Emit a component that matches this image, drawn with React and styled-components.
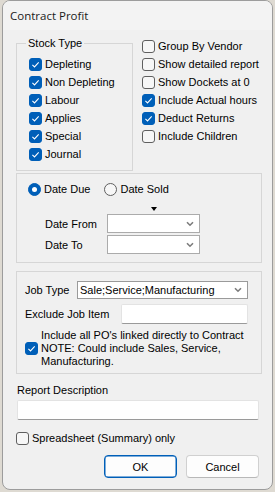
import React from 'react';
import styled, { createGlobalStyle } from 'styled-components';

const Global = createGlobalStyle`
  html, body { margin: 0; padding: 0; }
  body {
    background: #dedad2;
    width: 275px;
    height: 492px;
    overflow: hidden;
    font-family: "Liberation Sans", Arial, sans-serif;
    font-size: 11px;
    color: #000;
  }
  * { box-sizing: border-box; }
`;

const Window = styled.div`
  margin-left: 2px;
  width: 271px;
  height: 490px;
  border: 1px solid #9c9c9c;
  border-radius: 8px;
  background: #f0f0f0;
  overflow: hidden;
  display: flex;
  flex-direction: column;
`;

const TitleBar = styled.div`
  height: 29px;
  flex: none;
  background: #f3f3f3;
  display: flex;
  align-items: center;
  padding-left: 7px;
  font-family: "Open Sans", "Noto Sans", sans-serif;
  font-size: 11.5px;
  color: #1b1b1b;
`;

const Body = styled.div`
  padding: 7px 10px 0 13px;
  display: flex;
  flex-direction: column;
`;

const TopRow = styled.div`
  display: flex;
  align-items: flex-start;
  gap: 9px;
`;

const Group = styled.div`
  position: relative;
  border: 1px solid #d6d6d6;
  width: ${p => p.$w || 'auto'};
  height: ${p => p.$h}px;
  margin-top: ${p => p.$mt || 0}px;
  padding: ${p => p.$pad};
`;

const Legend = styled.span`
  position: absolute;
  top: -7px;
  left: 9px;
  padding: 0 2px;
  line-height: 13px;
  background: #f0f0f0;
`;

const Column = styled.div`
  display: flex;
  flex-direction: column;
`;

const CheckRow = styled.label`
  display: flex;
  align-items: center;
  gap: ${p => p.$gap ?? 3}px;
  height: ${p => p.$h || 18}px;
  margin-left: ${p => p.$ml || 0}px;
  margin-top: ${p => p.$mt || 0}px;
  white-space: nowrap;
  line-height: 13px;
`;

const Box = styled.span`
  flex: none;
  width: 13px;
  height: 13px;
  border-radius: 3px;
  display: flex;
  align-items: center;
  justify-content: center;
  background: ${p => (p.$on ? '#005fb8' : '#f7f7f7')};
  border: 1px solid ${p => (p.$on ? '#005fb8' : '#5f5f5f')};
`;

const Check = ({ on }) => (
  <Box $on={on}>
    {on && (
      <svg width="11" height="11" viewBox="0 0 11 11">
        <path d="M2.4 5.8 L4.5 7.9 L8.7 3.4" fill="none" stroke="#fff" strokeWidth="1.1" />
      </svg>
    )}
  </Box>
);

const CheckItem = ({ on, children, ...rest }) => (
  <CheckRow {...rest}>
    <Check on={on} />
    <span>{children}</span>
  </CheckRow>
);

const RadioRow = styled.div`
  display: flex;
  align-items: center;
  height: 14px;
`;

const RadioOption = styled.label`
  display: flex;
  align-items: center;
  gap: 3px;
  margin-right: 14px;
  white-space: nowrap;
`;

const RadioCircle = styled.span`
  flex: none;
  width: 13px;
  height: 13px;
  border-radius: 50%;
  display: flex;
  align-items: center;
  justify-content: center;
  background: ${p => (p.$on ? '#005fb8' : '#f7f7f7')};
  border: 1px solid ${p => (p.$on ? '#005fb8' : '#5f5f5f')};
  &::after {
    content: '';
    display: ${p => (p.$on ? 'block' : 'none')};
    width: 5px;
    height: 5px;
    border-radius: 50%;
    background: #fff;
  }
`;

const Radio = ({ on, children }) => (
  <RadioOption>
    <RadioCircle $on={on} />
    <span>{children}</span>
  </RadioOption>
);

const DateGrid = styled.div`
  margin-left: 17px;
  display: grid;
  grid-template-columns: 62px 93px;
  row-gap: 2px;
  align-items: center;
`;

const TriangleCell = styled.div`
  grid-column: 2;
  height: 4px;
  margin-top: 11px;
  margin-bottom: 1px;
  display: flex;
  justify-content: center;
`;

const Triangle = styled.span`
  width: 0;
  height: 0;
  border-left: 3.5px solid transparent;
  border-right: 3.5px solid transparent;
  border-top: 4px solid #000;
`;

const Combo = styled.div`
  height: ${p => p.$h || 19}px;
  flex: 1;
  background: #fff;
  border: 1px solid ${p => p.$border || '#ababab'};
  display: flex;
  align-items: center;
  justify-content: space-between;
  padding: 0 5px 0 2px;
  white-space: nowrap;
`;

const Chevron = () => (
  <svg width="8" height="6" viewBox="0 0 8 6">
    <path d="M1 1.2 L4 4.2 L7 1.2" fill="none" stroke="#7c7c7c" strokeWidth="1.6" />
  </svg>
);

const FieldRow = styled.div`
  display: flex;
  align-items: center;
  margin-top: ${p => p.$mt || 0}px;
`;

const FieldLabel = styled.span`
  width: ${p => p.$w}px;
  flex: none;
  white-space: nowrap;
`;

const TextInput = styled.div`
  height: 20px;
  flex: ${p => (p.$fill ? 1 : 'none')};
  margin-top: ${p => p.$mt || 0}px;
  background: #fff;
  border: 1px solid #e3e3e3;
  border-bottom-color: #9a9a9a;
  border-radius: 2px;
`;

const Note = styled.span`
  line-height: 13px;
  white-space: nowrap;
`;

const Bottom = styled.div`
  margin: 0 3px 0 1px;
  display: flex;
  flex-direction: column;
`;

const PlainLabel = styled.div`
  margin-top: 10px;
  line-height: 13px;
`;

const Buttons = styled.div`
  display: flex;
  justify-content: flex-end;
  gap: 9px;
  margin-top: 8px;
`;

const Button = styled.button`
  width: 73px;
  height: 23px;
  border-radius: 4px;
  background: #fdfdfd;
  font-family: "Liberation Sans", Arial, sans-serif;
  font-size: 11px;
  color: #000;
  padding: 0;
  border: 1px solid ${p => (p.$primary ? '#005fb8' : '#d0d0d0')};
  border-bottom-color: ${p => (p.$primary ? '#005fb8' : '#b8b8b8')};
  box-shadow: ${p => (p.$primary ? 'inset 0 0 0 0.5px #005fb8' : 'none')};
`;

export default function App() {
  return (
    <>
      <Global />
      <Window>
        <TitleBar>Contract Profit</TitleBar>
        <Body>
          <TopRow>
            <Group $w="117px" $h={128} $mt={6} $pad="11px 0 0 12px">
              <Legend>Stock Type</Legend>
              <CheckItem on>Depleting</CheckItem>
              <CheckItem on>Non Depleting</CheckItem>
              <CheckItem on>Labour</CheckItem>
              <CheckItem on>Applies</CheckItem>
              <CheckItem on>Special</CheckItem>
              <CheckItem on>Journal</CheckItem>
            </Group>
            <Column>
              <CheckItem>Group By Vendor</CheckItem>
              <CheckItem>Show detailed report</CheckItem>
              <CheckItem>Show Dockets at 0</CheckItem>
              <CheckItem on>Include Actual hours</CheckItem>
              <CheckItem on>Deduct Returns</CheckItem>
              <CheckItem>Include Children</CheckItem>
            </Column>
          </TopRow>

          <Group $h={90} $mt={2} $pad="8px 0 0 11px">
            <RadioRow>
              <Radio on>Date Due</Radio>
              <Radio>Date Sold</Radio>
            </RadioRow>
            <DateGrid>
              <TriangleCell>
                <Triangle />
              </TriangleCell>
              <span>Date From</span>
              <Combo>
                <span />
                <Chevron />
              </Combo>
              <span>Date To</span>
              <Combo>
                <span />
                <Chevron />
              </Combo>
            </DateGrid>
          </Group>

          <Group $h={103} $mt={8} $pad="9px 13px 0 8px">
            <FieldRow>
              <FieldLabel $w={52}>Job Type</FieldLabel>
              <Combo $h={18} $border="#9a9a9a">
                <span>Sale;Service;Manufacturing</span>
                <Chevron />
              </Combo>
            </FieldRow>
            <FieldRow $mt={5}>
              <FieldLabel $w={96}>Exclude Job Item</FieldLabel>
              <TextInput $fill />
            </FieldRow>
            <CheckRow $h={39} $mt={5}>
              <Check on />
              <Note>
                Include all PO's linked directly to Contract
                <br />
                NOTE: Could include Sales, Service,
                <br />
                Manufacturing.
              </Note>
            </CheckRow>
          </Group>

          <Bottom>
            <PlainLabel>Report Description</PlainLabel>
            <TextInput $mt={3} />
            <CheckItem $ml={-1} $mt={9}>Spreadsheet (Summary) only</CheckItem>
            <Buttons>
              <Button $primary>OK</Button>
              <Button>Cancel</Button>
            </Buttons>
          </Bottom>
        </Body>
      </Window>
    </>
  );
}
